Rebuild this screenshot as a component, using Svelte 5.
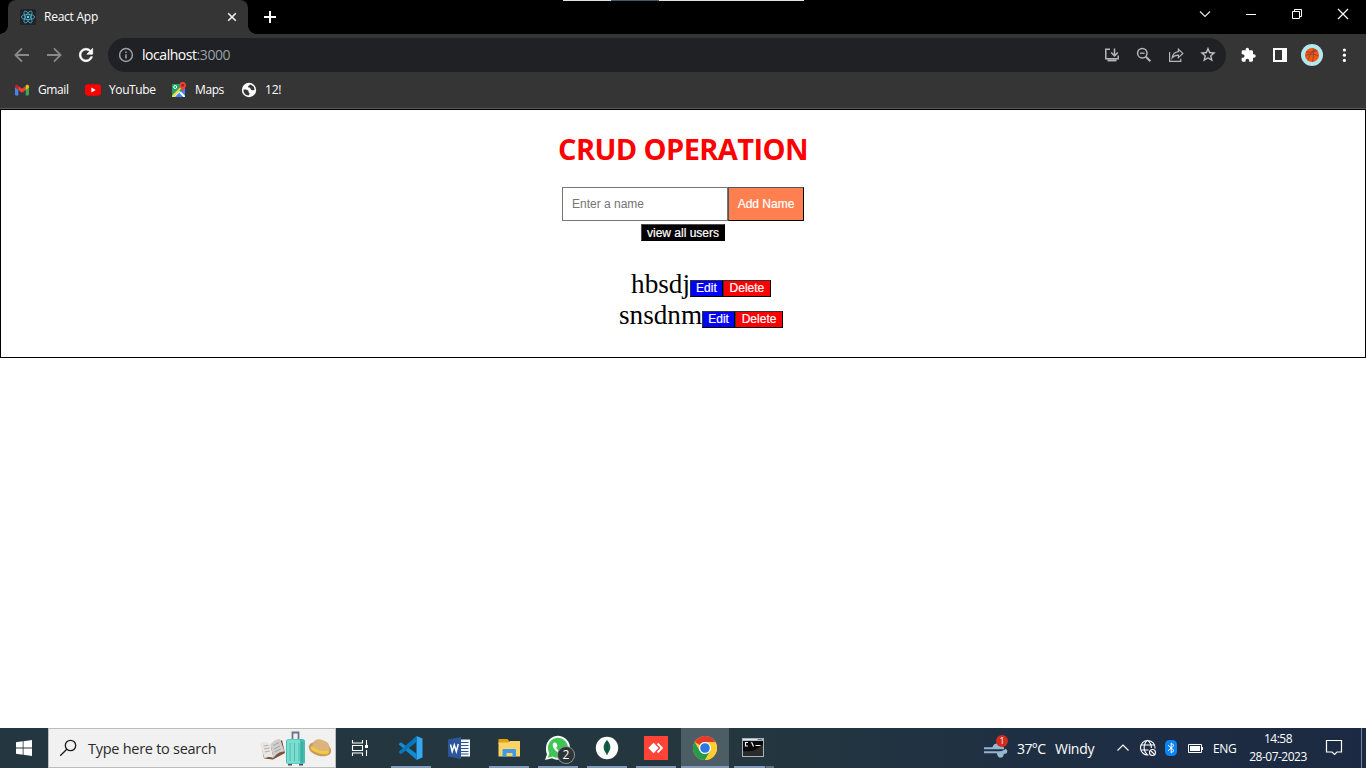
<script>
  const users = $state([
    { name: 'hbsdj' },
    { name: 'snsdnm' }
  ]);
  let draft = $state('');

  const petals = [0, 60, 120];
</script>

<div class="screen">
  <header class="tabstrip">
    <div class="tab">
      <svg class="favicon" width="16" height="16" viewBox="0 0 16 16">
        <rect width="16" height="16" rx="1.5" fill="#20232a" />
        <g fill="none" stroke="#4fb4cf" stroke-width=".8">
          {#each petals as angle}
            <ellipse cx="8" cy="8" rx="6.6" ry="2.6" transform={`rotate(${angle} 8 8)`} />
          {/each}
        </g>
        <circle cx="8" cy="8" r="1.3" fill="#5ccbe8" />
      </svg>
      <span class="tab-title">React App</span>
      <svg class="tab-close" width="16" height="16" viewBox="0 0 16 16" stroke="#f1f1f1" stroke-width="1.6"><path d="M4.2 4.2l7.6 7.6M11.8 4.2l-7.6 7.6" /></svg>
    </div>
    <svg class="newtab" width="28" height="28" viewBox="0 0 28 28" stroke="#fff" stroke-width="2"><path d="M14 8v12M8 14h12" /></svg>
    <div class="window-controls">
      <svg width="46" height="28" viewBox="0 0 46 28" fill="none" stroke="#e6e6e6" stroke-width="1.200"><path d="M18 11.500l5 5 5-5" /></svg>
      <svg width="46" height="28" viewBox="0 0 46 28" fill="none" stroke="#fff"><path d="M18 14.5h10" /></svg>
      <svg width="46" height="28" viewBox="0 0 46 28" fill="none" stroke="#fff"><path d="M18.5 11.5h7v7h-7zM20.5 11.5v-2h7v7h-2" /></svg>
      <svg width="46" height="28" viewBox="0 0 46 28" fill="none" stroke="#fff" stroke-width="1.200"><path d="M18 9l10 10M28 9l-10 10" /></svg>
    </div>
    <div class="edge-line"></div>
  </header>

  <nav class="toolbar">
    <svg width="32" height="34" viewBox="0 0 32 34" fill="none" stroke="#8a8a8a" stroke-width="1.8"><path d="M23 17H10M16 10.4L9.4 17l6.6 6.6" /></svg>
    <svg width="32" height="34" viewBox="0 0 32 34" fill="none" stroke="#8a8a8a" stroke-width="1.8"><path d="M9 17h13M16 10.4l6.6 6.6-6.6 6.6" /></svg>
    <svg width="32" height="22" viewBox="-7.2 -1.2 38.4 26.4" fill="#fff" stroke="#fff" stroke-width=".8"><path d="M17.65 6.35C16.2 4.9 14.21 4 12 4c-4.42 0-7.99 3.58-7.99 8s3.57 8 7.99 8c3.73 0 6.84-2.55 7.73-6h-2.08c-.82 2.33-3.04 4-5.65 4-3.31 0-6-2.69-6-6s2.69-6 6-6c1.66 0 3.14.69 4.22 1.78L13 11h7V4l-2.35 2.35z" /></svg>
    <div class="address">
      <svg class="info" width="16" height="16" viewBox="0 0 16 16" fill="none" stroke="#9aa0a6" stroke-width="1.5"><circle cx="8" cy="8" r="6.4" /><path d="M8 7.2v4.2M8 4.4v1.6" stroke-width="1.6" /></svg>
      <span class="url">localhost<span class="port">:3000</span></span>
      <div class="address-icons">
        <svg width="32" height="34" viewBox="0 0 32 34" fill="none" stroke="#b7b7b7" stroke-width="1.5"><path d="M14 11.3H9.8v9.4h12.4v-3.2M18.5 10.5v7M15.2 14.5l3.3 3.4 3.3-3.4" /><path d="M11.5 22.4h9" stroke-width="2" /></svg>
        <svg width="32" height="34" viewBox="0 0 32 34" fill="none" stroke="#b7b7b7" stroke-width="1.5"><circle cx="14.3" cy="15.2" r="4.7" /><path d="M12 15.2h4.6" stroke-width="1.3" /><path d="M17.8 18.7l4.6 4.6" stroke-width="2" /></svg>
        <svg width="32" height="34" viewBox="0 0 32 34" fill="none" stroke="#b7b7b7" stroke-width="1.2"><path d="M9.600 14v9.300h11.200v-2.500" /><path d="M18.400 11.200l4.400 4.200-4.400 4.200v-2.400c-3 0-4.800.8-6.300 2.800.5-3.600 2.500-6 6.300-6.400z" /></svg>
        <svg width="32" height="18" viewBox="-9.330 0.500 42.670 24" fill="#c4c4c4" stroke="#c4c4c4" stroke-width=".3"><path d="M22 9.24l-7.19-.62L12 2 9.19 8.63 2 9.24l5.46 4.73L5.82 21 12 17.27 18.18 21l-1.63-7.03L22 9.24zM12 15.4l-3.76 2.27 1-4.28-3.32-2.88 4.38-.38L12 6.1l1.71 4.04 4.38.38-3.32 2.88 1 4.28L12 15.4z" /></svg>
      </div>
    </div>
    <div class="tools">
      <svg width="32" height="16" viewBox="-12.5 0 48 24" fill="#fff"><path d="M20.5 11H19V7c0-1.1-.9-2-2-2h-4V3.5C13 2.12 11.88 1 10.5 1S8 2.12 8 3.5V5H4c-1.1 0-1.99.9-1.99 2v3.8H3.5c1.49 0 2.7 1.21 2.7 2.7s-1.21 2.7-2.7 2.7H2V20c0 1.1.9 2 2 2h3.8v-1.5c0-1.49 1.21-2.7 2.7-2.7 1.49 0 2.7 1.21 2.7 2.7V22H17c1.1 0 2-.9 2-2v-4h1.5c1.38 0 2.5-1.12 2.5-2.5S21.88 11 20.5 11z" /></svg>
      <svg width="32" height="34" viewBox="0 0 32 34"><path fill="#fff" fill-rule="evenodd" d="M9 10h14v14H9zM11 12v10h7V12z" /></svg>
      <svg width="32" height="34" viewBox="0 0 32 34"><circle cx="16" cy="17" r="11" fill="#b2e8ef" /><circle cx="16" cy="17" r="7" fill="#fb5410" /><g fill="none" stroke="#70493a" stroke-width=".8"><path d="M10 14c4 .5 9 0 11.500-1.500M17 10.200c.8 4 .7 9-.5 13.600M12 22.500c1-5 3.500-9 8-11M9.500 18c3-2.500 8-2.500 13 0" /></g></svg>
      <svg width="32" height="34" viewBox="0 0 32 34" fill="#fff"><circle cx="16.4" cy="12" r="1.6" /><circle cx="16.4" cy="17.2" r="1.6" /><circle cx="16.4" cy="22.4" r="1.6" /></svg>
    </div>
  </nav>

  <nav class="bookmarks">
    <a class="bookmark gmail" href="#gmail">
      <svg width="16" height="16" viewBox="0 0 16 16"><path fill="#4285f4" d="M1 4.500l3.300 2.400V13.500H2.100A1.100 1.100 0 0 1 1 12.400z" /><path fill="#34a853" d="M15 4.500l-3.300 2.400v6.600h2.200a1.100 1.100 0 0 0 1.100-1.100z" /><path fill="#ea4335" d="M4.300 3.900L8 6.700l3.700-2.800v4L8 10.700 4.300 7.900z" /><path fill="#c5221f" d="M1 4.500c0-1.700 1.700-2.200 2.800-1.300l.5.400v4.300L1 5.500z" /><path fill="#fbbc04" d="M15 4.500c0-1.700-1.700-2.200-2.800-1.300l-.5.400v4.300L15 5.500z" /></svg>
      <span>Gmail</span>
    </a>
    <a class="bookmark youtube" href="#youtube">
      <svg width="16" height="16" viewBox="0 0 16 16"><rect y="2.300" width="16" height="11.400" rx="3" fill="#f00" /><path fill="#fff" d="M6.400 5.500v5l4.300-2.500z" /></svg>
      <span>YouTube</span>
    </a>
    <a class="bookmark maps" href="#maps">
      <svg width="16" height="16" viewBox="0 0 16 16"><rect x="1" y="2" width="13" height="13" rx="1" fill="#1fa463" /><path d="M1.500 15L8 8.500l6 6v.5z" fill="#e8eaed" /><path d="M4.500 15L14 5v9.500l-4-4z" fill="#4285f4" /><path d="M1 13.500L11.500 3h2L2.500 15H1z" fill="#fdd835" /><path d="M4 15l4.300-4.300L12.500 15z" fill="#4285f4" /><path d="M8.500 11l1.400-1.400L14 13.700V15h-1.500z" fill="#fff" /><circle cx="4.200" cy="5" r="1.500" fill="none" stroke="#fff" /><path d="M11.700 0a3.300 3.300 0 0 0-3.300 3.300c0 2.700 2.700 3.400 3.300 6.700.6-3.300 3.300-4 3.300-6.700A3.300 3.300 0 0 0 11.700 0z" fill="#ea4335" /><circle cx="11.700" cy="3.300" r="1.200" fill="#8c1d18" /></svg>
      <span>Maps</span>
    </a>
    <a class="bookmark twelve" href="#twelve">
      <svg width="16" height="16" viewBox="0 0 16 16"><circle cx="8" cy="8" r="7.200" fill="#fff" /><path fill="#353535" d="M2.500 7.500c2-.2 4 .1 4.700 1.100.6.8-.1 1.700.8 2.100.8.300.7 1.700-.5 2.700C4.600 13.400 2.200 11 2.500 7.500zM8.800 2.600c-.2 1.300-1.800 1-1.800 2.100 0 1 1.200.6 1.900 1.100.8.7.5 1.900 1.600 2.300 1.200.4 2-.3 3-.1.200-2.700-1.900-5-4.700-5.400z" /></svg>
      <span>12!</span>
    </a>
  </nav>

  <main class="page">
    <h1>CRUD OPERATION</h1>
    <form onsubmit={(event) => event.preventDefault()}>
      <input type="text" placeholder="Enter a name" bind:value={draft} />
      <button class="add" type="submit">Add Name</button>
    </form>
    <button class="view">view all users</button>
    <ul class="users">
      {#each users as user}
        <li><span class="name">{user.name}</span><button class="edit">Edit</button><button class="delete">Delete</button></li>
      {/each}
    </ul>
  </main>

  <footer class="taskbar">
    <div class="start">
      <svg width="16" height="16" viewBox="0 0 16 16" fill="#fff"><path d="M0 2.300l6.700-1v6.300H0zM7.500 1.200L16 0v7.600H7.500zM0 8.400h6.700v6.300l-6.700-1zM7.500 8.400H16V16l-8.500-1.200z" /></svg>
    </div>
    <div class="search">
      <svg width="18" height="18" viewBox="0 0 18 18" fill="none" stroke="#1b1b1b" stroke-width="1.300"><circle cx="10.500" cy="6.500" r="5.200" /><path d="M6.800 10.200L.2 16.800" /></svg>
      <span>Type here to search</span>
      <svg class="travel" width="76" height="38" viewBox="0 0 76 38">
        <path d="M1 15l11 2 10-6 3 13-12 6.500-9-1z" fill="#79543a" />
        <path d="M0 14.500c4-2.500 8-1.500 10.500 1l3 13.500c-3-1.500-6-1.500-9 .5z" fill="#e9e7e3" />
        <path d="M10.500 15.500c2-3.500 6-5.500 9.500-5.500l4.500 12.500c-4 0-8 2-11 6.500z" fill="#d0cfcd" />
        <path d="M3.500 17l5-.8M4 20l5.500-1M4.800 23l5-1M13 16.500l6-3M14 20l6-3M14.700 23l6-3" stroke="#85827f" stroke-width=".6" />
        <path d="M32.500 10V3.500h6V10" fill="none" stroke="#6c7488" stroke-width="1.800" />
        <rect x="26" y="10" width="19" height="25" rx="2.500" fill="#45bdb0" /><rect x="27" y="10.500" width="13" height="24" rx="1" fill="#79ddd0" />
        <path d="M30 14v18M34.500 14v18M39 14v18" stroke="#45b5aa" stroke-width=".8" /><path d="M42 13v20" stroke="#329e94" />
        <path d="M28 35v1.500h4V35M39 35v1.500h4V35" fill="#48505c" />
        <ellipse cx="60" cy="20" rx="11.500" ry="7" transform="rotate(14 60 20)" fill="#c79c63" />
        <path d="M52.500 19c0-7 3-9.500 8-8.500 2 .3 3 1 4.500 1.500 4 1.500 5 5 4 10-4 4-12 3-16.500-3z" fill="#dbb47c" />
        <path d="M51.500 17c4 4 11 6.500 17.500 4l-.5 3.500c-6 2-14-1-18-5z" fill="#f5cb3c" />
      </svg>
    </div>
    <div class="taskview">
      <svg width="18" height="18" viewBox="0 0 18 18" fill="none" stroke="#fff" stroke-width="1.100"><path d="M1.500 1v3h10V1M1.500 17v-3h10v3M1.500 6.500h10v5h-10zM15.500 1v5M15.500 11v6" /><path fill="#fff" stroke="none" d="M14 6h3v3h-3z" /></svg>
    </div>
    <div class="apps">
      <div class="app open">
        <svg width="26" height="26" viewBox="0 0 26 26"><path d="M18.500 1L24.500 3.500v19l-6 2.500z" fill="#33a8f4" /><path d="M3 7.200L1 8.800v1l17.500 15v-6z" fill="#118bd3" /><path d="M18.500 1v6L3 19.200 1 17.500v-1z" fill="#0878bc" /></svg>
      </div>
      <div class="app word">
        <svg width="24" height="24" viewBox="0 0 24 24"><path d="M12 3.500h11v17H12z" fill="#f5f7fb" /><path d="M14 6.500h7.500M14 9.500h7.500M14 12.500h7.500M14 15.500h7.500M14 18h7.500" stroke="#2b579a" stroke-width="1" /><path d="M1 3.500L14 1v22L1 20.500z" fill="#2b579a" /><path d="M3.500 8.500l1.700 7 2.100-6.500 2 6.500 2-7.500" stroke="#fff" stroke-width="1.500" fill="none" /></svg>
      </div>
      <div class="app open">
        <svg width="24" height="24" viewBox="0 0 24 24"><path d="M1.500 3h9l1.500 2v3H1.500z" fill="#e7a10a" /><path d="M1.500 6.500H11L13 5h10v15.500H1.500z" fill="#ffd36a" /><path d="M5.500 21v-6.500c0-1 .5-1.500 1.500-1.500h10.500c1 0 1.500.5 1.500 1.500V21h-3.500v-4h-6v4z" fill="#3c9de4" /></svg>
      </div>
      <div class="app open whatsapp">
        <svg width="40" height="30" viewBox="0 0 40 30"><path d="M8 15a12 12 0 1 1 6 10.200L7 27l2-5.800A12 12 0 0 1 8 15z" fill="#fff" /><path d="M10 15a10 10 0 1 1 4.800 8.400l-5 1.300 1.500-4.500A10 10 0 0 1 10 15z" fill="#3ec653" /><path d="M16 9.500c-2.500 1.500-1 5.500 2 8.500s6.800 4.600 8.500 2.200c.8-1.100.6-1.600 0-2l-2.200-1.200-1.600 1.700c-2-.7-3.600-2.200-4.500-4.300l1.300-1.400-1-2.600c-.4-.8-1.200-1.100-2.500-.9z" fill="#fff" /></svg>
        <span class="count">2</span>
      </div>
      <div class="app open">
        <svg width="24" height="24" viewBox="0 0 24 24"><circle cx="12" cy="12" r="11.200" fill="#fff" /><path d="M12 4c4.300 4.500 4.700 9.500 0 14.200-4.700-4.700-4.300-9.700 0-14.200z" fill="#136149" /><path d="M12 5v14" stroke="#0b4534" stroke-width=".9" /></svg>
      </div>
      <div class="app open">
        <svg width="24" height="24" viewBox="0 0 24 24"><path fill="#ff4337" d="M0 0h24v24H0z" /><path fill="#fff" d="M9.500 6.800L14.700 12l-5.200 5.200L4.300 12z" /><path d="M13.500 7.500L18 12l-4.500 4.500" fill="none" stroke="#fff" stroke-width="1.800" /></svg>
      </div>
      <div class="app open active">
        <svg width="24" height="24" viewBox="0 0 24 24"><circle cx="12" cy="12" r="12" fill="#fc3" /><path fill="#e33b2e" d="M1.600 6A12 12 0 0 1 22.400 6H12a6 6 0 0 0-5.200 3z" /><path fill="#269b4b" d="M1.600 6l5.200 9A6 6 0 0 0 12 18l5.200-3L12 24A12 12 0 0 1 1.600 6z" /><path fill="#fc3" d="M12 6h10.400A12 12 0 0 1 12 24l5.200-9A6 6 0 0 0 12 6z" /><circle cx="12" cy="12" r="6" fill="#fff" /><circle cx="12" cy="12" r="4.800" fill="#2b77e8" /></svg>
      </div>
      <div class="app open multiple">
        <svg width="24" height="24" viewBox="0 0 24 24"><path fill="#aab4bd" d="M1 2h22v19H1z" /><path fill="#080808" d="M2 5h20v15H2z" /><path fill="#dfe5e9" d="M2 3h14v1.200H2z" /><path d="M17 3.500h4" stroke="#567393" /><path d="M2 20V15q12 2 20-7v12z" fill="#2b2b2b" /><path d="M7 6.500H4.500v3.500H7M9 7h.1M9 10h.1M10.500 6l2 4.500M14.500 9.500h5" fill="none" stroke="#f0f0f0" stroke-width="1.200" /></svg>
      </div>
    </div>
    <div class="tray">
      <div class="weather">
        <svg width="26" height="24" viewBox="0 0 26 24"><path d="M9 11c1-5 8-6 10 0zM13.500 16c1 6 6 4.500 5.500-.5 4 2 4.500-2.500 2-3" fill="#9bb8ce" stroke="#9bb8ce" stroke-width="1.500" /><path d="M0 11.200h20M0 15.300h18" stroke="#8fb5d3" stroke-width="2" /></svg>
        <span class="alert">1</span>
        <span class="temp">37°C</span><span class="condition">Windy</span>
      </div>
      <svg class="chevron" width="14" height="10" viewBox="0 0 14 10" fill="none" stroke="#fff" stroke-width="1.200"><path d="M1.500 7.500L7 2l5.500 5.500" /></svg>
      <svg class="globe" width="18" height="18" viewBox="0 0 18 18" fill="none" stroke="#fff" stroke-width="1.100"><path d="M9.500 16A7.300 7.300 0 1 1 16 9.500M1.500 6h14M1.500 11h8M8.500 1.200c-4.500 4-4.500 10.500 0 14.600M8.500 1.200c2.800 2.400 4 5.300 3.800 7.800" /><circle cx="13.500" cy="13.500" r="3" /><path d="M11.500 11.500l4 4" /></svg>
      <svg class="bluetooth" width="12" height="16" viewBox="0 0 12 16"><rect width="12" height="16" rx="4.500" fill="#0a84f4" /><path d="M3 5.200l6 5.300L6.200 13V3L9 5.500l-6 5.300" fill="none" stroke="#fff" /></svg>
      <svg class="battery" width="16" height="10" viewBox="0 0 16 10"><path d="M.5.500h13v8H.5z" fill="none" stroke="#fff" /><path fill="#fff" d="M2 2h10v5H2zM14 3h1v3h-1z" /></svg>
      <span class="language">ENG</span>
      <div class="clock"><span class="time">14:58</span><span class="date">28-07-2023</span></div>
      <svg class="notice" width="18" height="18" viewBox="0 0 18 18" fill="none" stroke="#fff" stroke-width="1.200"><path d="M1.500 1.500h15v11.500H12L9.500 15.500 7 13H1.500z" /></svg>
      <div class="show-desktop"></div>
    </div>
  </footer>
</div>

<style>
  :global(body) { background: #fff; overflow: hidden; }
  * { box-sizing: border-box; }
  svg { display: block; flex: none; }
  .screen { width: 1366px; height: 768px; display: flex; flex-direction: column; font-family: "Open Sans", sans-serif; overflow: hidden; }

  .tabstrip { position: relative; height: 34px; background: #000; display: flex; padding-left: 8px; flex: none; }
  .tab { position: relative; width: 240px; height: 34px; background: #353535; border-radius: 8px 8px 0 0; display: flex; align-items: center; padding: 0 8px 0 12px; color: #fff; }
  .tab::before, .tab::after { content: ""; position: absolute; bottom: 0; width: 8px; height: 8px; }
  .tab::before { left: -8px; background: radial-gradient(circle at 0 0, #000 7.5px, #353535 8px); }
  .tab::after { right: -8px; background: radial-gradient(circle at 100% 0, #000 7.5px, #353535 8px); }
  .tab-title { font-size: 12px; letter-spacing: -0.25px; margin-left: 8px; flex: 1; white-space: nowrap; padding-bottom: 1px; }
  .newtab { margin: 3px 0 0 8px; }
  .window-controls { display: flex; margin-left: auto; }
  .edge-line { position: absolute; top: 0; left: 563px; width: 241px; height: 1px; background: linear-gradient(90deg, #dfe3e2 48px, #465a6d 48px 96px, #dfe3e2 96px); }

  .toolbar { height: 38px; background: #353535; display: flex; align-items: center; padding: 4px 6px 0; flex: none; }
  .toolbar > svg:nth-of-type(3) { margin-right: 6px; }
  .address { width: 1118px; height: 34px; border-radius: 17px; background: #202124; display: flex; align-items: center; padding: 0 2px 0 10px; }
  .url { color: #fff; font-size: 14px; letter-spacing: -0.45px; margin-left: 8px; white-space: nowrap; padding-bottom: 2px; }
  .port { color: #9aa0a6; }
  .address-icons { display: flex; align-items: center; margin-left: auto; }
  .tools { display: flex; align-items: center; margin-left: 6px; }

  .bookmarks { height: 37px; background: #353535; border-bottom: 1px solid #5b5b5b; display: flex; align-items: center; padding-left: 14px; flex: none; }
  .bookmark { display: flex; align-items: center; color: #fff; text-decoration: none; font-size: 12px; height: 36px; gap: 8px; white-space: nowrap; letter-spacing: -0.4px; }
  .bookmark span { padding-bottom: 2px; }
  .gmail { width: 71px; }
  .youtube { width: 86px; }
  .maps { width: 70px; }
  .twelve { letter-spacing: -0.2px; }

  .page { height: 249px; border: 1px solid #000; flex: none; display: flex; flex-direction: column; align-items: center; }
  h1 { margin: 18px 0 0; height: 42px; line-height: 42px; font-size: 29px; font-weight: 700; color: #f00; white-space: nowrap; letter-spacing: -0.6px; }
  form { display: flex; margin-top: 17px; }
  input, button { font-family: "Liberation Sans", Arial, sans-serif; font-size: 12px; border-radius: 0; margin: 0; }
  input { width: 166px; height: 34px; border: 1px solid #767676; padding: 0 9px; outline: none; }
  input::placeholder { color: #757575; }
  button { padding: 0; color: #fff; border: 1px solid #000; text-align: center; white-space: nowrap; -webkit-text-stroke: 0.2px #fff; }
  .add { width: 76px; height: 34px; background: #ff7f50; border-top-color: #555; border-left-color: #555; }
  .view { width: 84px; height: 17px; margin-top: 3px; padding-top: 1px; line-height: 15px; background: #000; border-top-color: #4c4c4c; border-left-color: #4c4c4c; }
  .users { list-style: none; margin: 28px 0 0; padding: 0 0 0 36px; font: 27.2px/31px "Liberation Serif", "Times New Roman", serif; }
  li { height: 31px; display: flex; align-items: baseline; justify-content: center; }
  .edit, .delete { height: 17px; line-height: 15px; border-top-color: #333; border-left-color: #333; margin-bottom: 1px; transform: translateY(-1px); }
  .edit { width: 33px; background: #00f; }
  .delete { width: 48px; background: #f00; }

  .taskbar { height: 40px; margin-top: auto; display: flex; flex: none; background: linear-gradient(90deg, #24363f, #24373f 55%, #1f2f43 75%, #1b2942); color: #fff; }
  .start { width: 48px; display: flex; align-items: center; justify-content: center; }
  .search { width: 288px; border: 1px solid #bcbcbc; background: #f1f1f1; display: flex; align-items: center; padding: 0 0 0 11px; }
  .search span { color: #2b2b2b; font-size: 14.5px; letter-spacing: -0.27px; margin-left: 10px; white-space: nowrap; }
  .travel { margin-left: auto; margin-right: -1px; }
  .taskview { width: 51px; display: flex; align-items: center; justify-content: center; padding-right: 3px; }
  .apps { display: flex; gap: 1px; }
  .app { position: relative; width: 48px; height: 40px; display: flex; align-items: center; justify-content: center; }
  .word { padding-right: 2px; }
  .open::after { content: ""; position: absolute; left: 4px; right: 4px; bottom: 0; height: 2px; background: #8299bc; }
  .active { background: #4d5d65; }
  .active::after { left: 0; right: 0; }
  .multiple { padding-right: 2px; }
  .multiple::after { right: 4px; background: linear-gradient(90deg, #8299bc 31px, #33464f 31px 32px, #5e7184 32px); }
  .count { position: absolute; left: 24px; top: 19px; width: 16px; height: 16px; border-radius: 50%; background: #2b3438; box-shadow: 0 0 0 1px #8b9295; font-size: 12px; line-height: 16px; text-align: center; }

  .tray { display: flex; align-items: center; margin-left: auto; }
  .weather { position: relative; display: flex; align-items: center; font-size: 14px; white-space: nowrap; }
  .weather svg { margin-top: 2px; }
  .alert { position: absolute; left: 12px; top: 0; width: 12px; height: 12px; border-radius: 50%; background: #d42b1f; font-size: 9px; line-height: 12px; text-align: center; }
  .temp { width: 38px; margin-left: 7px; letter-spacing: -0.6px; }
  .condition { width: 61px; letter-spacing: -0.3px; }
  .chevron { margin-right: 9px; }
  .bluetooth { margin-left: 8px; }
  .battery { margin: 1px 0 0 11px; }
  .language { font-size: 12px; letter-spacing: -0.3px; width: 28px; margin-left: 9px; }
  .clock { width: 72px; margin-left: 1px; display: flex; flex-direction: column; align-items: center; font-size: 12px; line-height: 18px; letter-spacing: -0.5px; padding-bottom: 1px; white-space: nowrap; }
  .notice { margin-left: 11px; }
  .show-desktop { width: 5px; height: 40px; border-left: 1px solid #75809a; margin-left: 18px; }
</style>
